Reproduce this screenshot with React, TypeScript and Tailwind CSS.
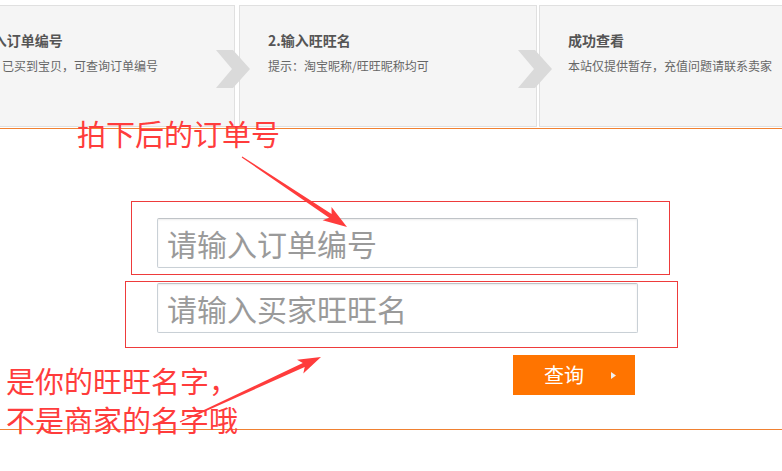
import React from "react";

const CJK = "font-['Noto_Sans_CJK_SC','Noto_Sans',sans-serif]";

function arrowPoints(x1: number, y1: number, x2: number, y2: number, L: number, W: number, w: number) {
  const dx = x2 - x1;
  const dy = y2 - y1;
  const len = Math.hypot(dx, dy);
  const ux = dx / len;
  const uy = dy / len;
  const nx = -uy;
  const ny = ux;
  const bx = x2 - ux * L;
  const by = y2 - uy * L;
  const pts: [number, number][] = [
    [x1 + nx * 0.6, y1 + ny * 0.6],
    [bx + nx * w, by + ny * w],
    [bx - ux * 4 + nx * W, by - uy * 4 + ny * W],
    [x2, y2],
    [bx - ux * 4 - nx * W, by - uy * 4 - ny * W],
    [bx - nx * w, by - ny * w],
    [x1 - nx * 0.6, y1 - ny * 0.6],
  ];
  return pts.map((p) => p[0].toFixed(1) + "," + p[1].toFixed(1)).join(" ");
}

function Chevron() {
  return (
    <svg className="absolute right-[-16px] top-[44px] z-10" width="34" height="38" viewBox="0 0 34 38">
      <polygon points="0,0 17,0 34,19 17,38 0,38 16,19" fill="#dadada" />
    </svg>
  );
}

function Step({ title, tip, chevron, extra }: { title: string; tip: string; chevron?: boolean; extra?: string }) {
  return (
    <div className={"relative w-[298px] h-[122px] shrink-0 bg-[#f5f5f5] border border-[#e0e0e0] pl-[28px] pt-[24px] " + (extra || "")}>
      <div className="text-[14px] leading-[20px] font-bold text-[#555] whitespace-nowrap">{title}</div>
      <div className="mt-[6px] text-[12px] leading-[20px] text-[#666] whitespace-nowrap">{tip}</div>
      {chevron && <Chevron />}
    </div>
  );
}

export default function App() {
  return (
    <div className={"relative w-[782px] h-[471px] overflow-hidden bg-white " + CJK}>
      {/* steps bar */}
      <div className="pt-[5px] pb-[1px] border-b border-[#f08132]">
        <div className="flex ml-[-63px]">
          <Step title="1.输入订单编号" tip="提示：已买到宝贝，可查询订单编号" chevron />
          <Step title="2.输入旺旺名" tip="提示：淘宝昵称/旺旺昵称均可" chevron extra="ml-[4px]" />
          <Step title="成功查看" tip="本站仅提供暂存，充值问题请联系卖家" extra="ml-[2px]" />
        </div>
      </div>

      {/* form */}
      <div className="pt-[89px] pb-[34px] border-b border-[#f08132]">
        <div className="flex flex-col gap-[15px] pl-[157px]">
          <input
            className={"w-[481px] h-[50px] border border-[#c9d0d6] border-t-[#bfc3c7] rounded-[2px] shadow-[inset_0_1px_2px_rgba(0,0,0,0.08)] pl-[9px] text-[30px] text-[#333] placeholder:text-[#9a9a9a] outline-none bg-white " + CJK}
            placeholder="请输入订单编号"
          />
          <input
            className={"w-[481px] h-[50px] border border-[#c9d0d6] border-t-[#bfc3c7] rounded-[2px] shadow-[inset_0_1px_2px_rgba(0,0,0,0.08)] pl-[9px] text-[30px] text-[#333] placeholder:text-[#9a9a9a] outline-none bg-white " + CJK}
            placeholder="请输入买家旺旺名"
          />
        </div>
        <div className="mt-[22px] ml-[513px] w-[122px] h-[40px] bg-[#ff7400] flex items-center pl-[31px]">
          <span className="text-[20px] leading-none text-white">查询</span>
          <svg className="ml-[27px]" width="5" height="7" viewBox="0 0 5 7">
            <polygon points="0,0 5,3.5 0,7" fill="#f0f0f0" />
          </svg>
        </div>
      </div>

      {/* annotations */}
      <div className="absolute left-[131px] top-[201px] w-[539px] h-[74px] border border-[#ee3b3b] pointer-events-none" />
      <div className="absolute left-[125px] top-[281px] w-[553px] h-[67px] border border-[#ee3b3b] pointer-events-none" />
      <div className="absolute left-[77px] top-[119px] text-[29px] leading-[29px] text-[#ff3c3c] whitespace-nowrap">拍下后的订单号</div>
      <div className="absolute left-[6px] top-[361px] text-[29px] leading-[39px] text-[#ff3c3c] whitespace-nowrap">
        <div>是你的旺旺名字，</div>
        <div>不是商家的名字哦</div>
      </div>
      <svg className="absolute left-0 top-0 pointer-events-none" width="782" height="471" viewBox="0 0 782 471">
        <polygon points={arrowPoints(242, 157, 347, 227, 20, 8, 2.2)} fill="#ff3c3c" />
        <polygon points={arrowPoints(180, 422, 321, 357, 19, 7.5, 2.2)} fill="#ff3c3c" />
      </svg>
    </div>
  );
}
